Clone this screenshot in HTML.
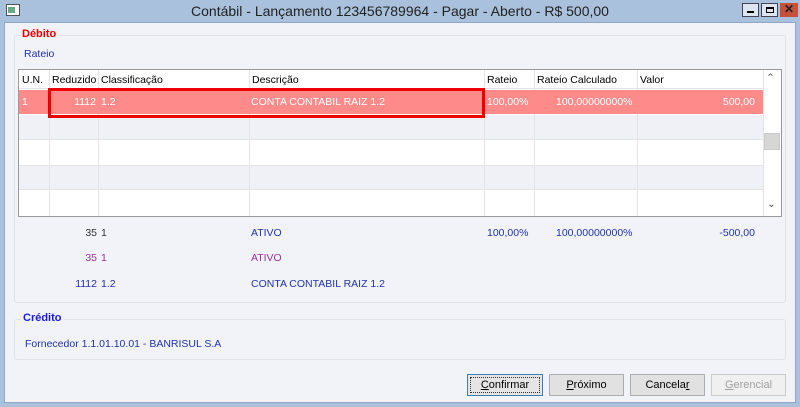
<!DOCTYPE html>
<html><head><meta charset="utf-8"><style>
*{margin:0;padding:0;box-sizing:border-box}
body{width:800px;height:407px;overflow:hidden;background:#a9c1dc;font-family:"Liberation Sans",sans-serif;font-size:11px;position:relative}
.a{position:absolute}
.win{left:4px;top:22px;width:792px;height:381px;background:#f2f3f9;border:1px solid #8fa7c4}
.gb{border:1px solid #dfe2ea;border-radius:3px;background:#f2f3f9}
.lbl{font-weight:bold;font-size:11px;background:#f2f3f9;padding:0 2px}
.t{white-space:nowrap;font-size:10.5px}
.btn{border:1px solid #adadad;background:#e1e1e1;text-align:center;line-height:20px;font-size:11px;color:#000}
.vl{position:absolute;top:70px;width:1px;height:146px;background:#e4e4e4}
</style></head><body>
<div class="a" style="left:6px;top:4px;width:14px;height:12px;background:#fff;border:1px solid #555"><div class="a" style="left:1px;top:2px;width:7px;height:6px;background:#6a8"></div></div>
<div class="a t" style="left:0;width:800px;top:3px;text-align:center;font-size:14px;color:#222">Contábil - Lançamento 123456789964 - Pagar - Aberto - R$ 500,00</div>
<div class="a" style="left:742px;top:3px;width:17px;height:14px;background:#dde6f0;border:1px solid #445"><div class="a" style="left:4px;top:7px;width:7px;height:2px;background:#000"></div></div>
<div class="a" style="left:761px;top:3px;width:17px;height:14px;background:#dde6f0;border:1px solid #445"><div class="a" style="left:4px;top:3px;width:8px;height:6px;border:1px solid #000;border-top-width:2px"></div></div>
<div class="a" style="left:780px;top:3px;width:18px;height:14px;background:#c7503c;color:#222;font-weight:bold;text-align:center;line-height:13px;font-size:12px">✕</div>
<div class="a win"></div>
<div class="a gb" style="left:14px;top:35px;width:772px;height:268px"></div>
<div class="a lbl" style="left:20px;top:28px;color:#e00">Débito</div>
<div class="a t" style="left:24px;top:48px;color:#2233aa">Rateio</div>
<!-- grid -->
<div class="a" style="left:18px;top:69px;width:764px;height:148px;border:1px solid #999;background:#fff"></div>
<div class="a" style="left:19px;top:70px;width:744px;height:19px;background:#fff;border-bottom:1px solid #e4e4e4"></div>
<div class="a" style="left:19px;top:115px;width:744px;height:25px;background:#f0f1f7;border-bottom:1px solid #e4e4e4"></div>
<div class="a" style="left:19px;top:165px;width:744px;height:25px;background:#f0f1f7;border-top:1px solid #e4e4e4;border-bottom:1px solid #e4e4e4"></div>
<div class="vl" style="left:49px"></div>
<div class="vl" style="left:98px"></div>
<div class="vl" style="left:249px"></div>
<div class="vl" style="left:484px"></div>
<div class="vl" style="left:534px"></div>
<div class="vl" style="left:637px"></div>
<div class="a" style="left:19px;top:90px;width:744px;height:24px;background:#ff8a8a"></div>
<div class="a" style="left:763px;top:70px;width:18px;height:146px;background:#fff;border-left:1px solid #e4e4e4"></div>
<div class="a t" style="left:766px;top:72px;color:#555">&#8963;</div>
<div class="a t" style="left:767px;top:198px;color:#555">&#8964;</div>
<div class="a" style="left:764px;top:133px;width:16px;height:17px;background:#d6d6d6;border:1px solid #ccc"></div>
<div class="a t" style="left:22px;top:74px">U.N.</div>
<div class="a t" style="left:52px;top:74px">Reduzido</div>
<div class="a t" style="left:101px;top:74px">Classificação</div>
<div class="a t" style="left:252px;top:74px">Descrição</div>
<div class="a t" style="left:487px;top:74px">Rateio</div>
<div class="a t" style="left:537px;top:74px">Rateio Calculado</div>
<div class="a t" style="left:640px;top:74px">Valor</div>
<div class="a t" style="left:22px;top:96px;color:#fff">1</div>
<div class="a t" style="left:50px;top:96px;width:46px;text-align:right;color:#fff">1112</div>
<div class="a t" style="left:101px;top:96px;color:#fff">1.2</div>
<div class="a t" style="left:251px;top:96px;color:#fff">CONTA CONTABIL RAIZ 1.2</div>
<div class="a t" style="left:487px;top:96px;color:#fff">100,00%</div>
<div class="a t" style="left:556px;top:96px;color:#fff">100,00000000%</div>
<div class="a t" style="left:640px;top:96px;width:115px;text-align:right;color:#fff">500,00</div>
<div class="a" style="left:48px;top:88px;width:437px;height:30px;border:3px solid #e00"></div>
<!-- summary -->
<div class="a t" style="left:50px;top:227px;width:47px;text-align:right;color:#333">35</div>
<div class="a t" style="left:101px;top:227px;color:#333">1</div>
<div class="a t" style="left:251px;top:227px;color:#2233aa">ATIVO</div>
<div class="a t" style="left:487px;top:227px;color:#2233aa">100,00%</div>
<div class="a t" style="left:556px;top:227px;color:#2233aa">100,00000000%</div>
<div class="a t" style="left:640px;top:227px;width:115px;text-align:right;color:#2233aa">-500,00</div>
<div class="a t" style="left:50px;top:252px;width:47px;text-align:right;color:#993399">35</div>
<div class="a t" style="left:101px;top:252px;color:#993399">1</div>
<div class="a t" style="left:251px;top:252px;color:#993399">ATIVO</div>
<div class="a t" style="left:50px;top:278px;width:47px;text-align:right;color:#2233aa">1112</div>
<div class="a t" style="left:101px;top:278px;color:#2233aa">1.2</div>
<div class="a t" style="left:251px;top:278px;color:#2233aa">CONTA CONTABIL RAIZ 1.2</div>
<!-- credito -->
<div class="a gb" style="left:14px;top:319px;width:772px;height:41px"></div>
<div class="a lbl" style="left:21px;top:312px;color:#1a1aee">Crédito</div>
<div class="a t" style="left:25px;top:338px;color:#2233aa">Fornecedor 1.1.01.10.01 - BANRISUL S.A</div>
<!-- buttons -->
<div class="a btn" style="left:467px;top:374px;width:76px;height:22px;border-color:#3c7fb1;background:#e5e5e5"><div style="position:absolute;left:2px;top:2px;right:2px;bottom:2px;border:1px dotted #333"></div><u>C</u>onfirmar</div>
<div class="a btn" style="left:549px;top:374px;width:75px;height:22px"><u>P</u>róximo</div>
<div class="a btn" style="left:630px;top:374px;width:75px;height:22px">Cancela<u>r</u></div>
<div class="a btn" style="left:711px;top:374px;width:75px;height:22px;background:#f0f0f0;border-color:#ccc;color:#a0a0a0"><u>G</u>erencial</div>
</body></html>
